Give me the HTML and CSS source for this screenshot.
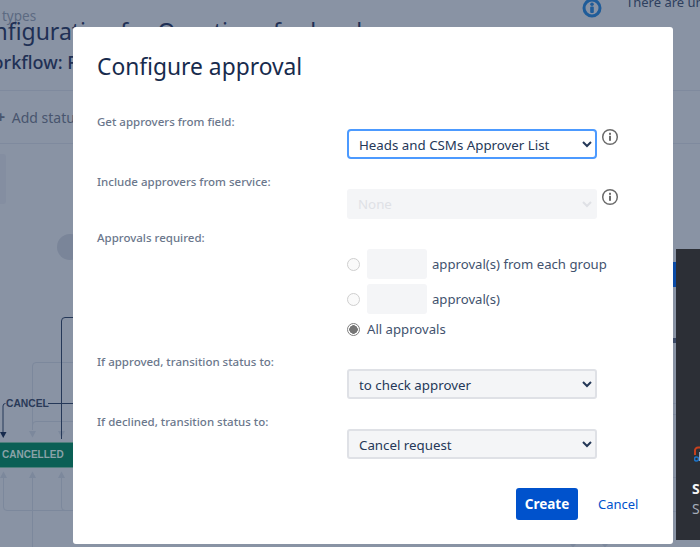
FILE: index.html
```html
<!DOCTYPE html>
<html lang="en">
<head>
<meta charset="utf-8">
<title>Configure approval</title>
<link rel="stylesheet" href="styles.css">
</head>
<body>
<div class="page">
  <div class="crumb">types</div>
  <div class="page-title">Configuration for Questions for legal</div>
  <div class="workflow">Workflow: F</div>
  <div class="rule rule-a"></div>
  <div class="rule rule-b"></div>
  <div class="add-status"><span class="plus">+</span> Add status</div>
  <div class="side-box"></div>
  <div class="start-node"></div>
  <svg class="page-info" width="20" height="20" viewBox="0 0 20 20" aria-hidden="true">
    <circle cx="10" cy="10" r="8" fill="none" stroke="#1f5c99" stroke-width="3"/>
    <rect x="8.2" y="8.5" width="3.6" height="6.5" rx="1" fill="#1f5c99"/>
    <circle cx="10" cy="6.3" r="1.8" fill="#1f5c99"/>
  </svg>
  <div class="notice">There are un</div>

  <svg class="diagram" width="73" height="547" viewBox="0 0 73 547" aria-hidden="true">
    <g fill="none" stroke="#7c889c" stroke-width="1">
      <path d="M73 362.5H36a3.500 3.500 0 0 0-3.500 3.500V430"/>
      <path d="M73 421.500H36a3.500 3.500 0 0 0-3.500 3.500V430"/>
      <path d="M3.500 478V507a3.500 3.500 0 0 0 3.500 3.500H73"/>
      <path d="M61.500 478V507a3.500 3.500 0 0 0 3.500 3.500H73"/>
      <path d="M32.500 478V547"/>
    </g>
    <g fill="#7c889c">
      <path d="M29 431h7l-3.500 6.500z"/>
      <path d="M58 431h7l-3.500 6.500z"/>
      <path d="M0 478h7l-3.500-6.500z"/>
      <path d="M29 478h7l-3.500-6.500z"/>
      <path d="M58 478h7l-3.500-6.500z"/>
    </g>
    <g fill="none" stroke="#253858" stroke-width="1">
      <path d="M73 317.500H65a3.500 3.500 0 0 0-3.500 3.500V439"/>
      <path d="M48 403.500H73"/>
      <path d="M5.500 403.500a2.500 2.500 0 0 0-2.500 2.500V432"/>
    </g>
    <path d="M0 432h6.500l-3.250 6z" fill="#172b4d"/>
  </svg>
  <div class="edge-label">CANCEL</div>
  <div class="status-bar">CANCELLED</div>

  <div class="strip strip-blue"></div>
  <div class="strip strip-line-1"></div>
  <div class="strip strip-line-2"></div>
  <div class="strip strip-line-3"></div>
  <div class="strip strip-line-4"></div>
  <div class="strip strip-dot"></div>
  <svg class="below-arrows" width="44" height="4" viewBox="0 0 44 4" aria-hidden="true">
    <path d="M0 0h6l-3 3.500zM32 0h6l-3 3.500z" fill="#7c889c"/>
  </svg>

  <aside class="dark-panel">
    <svg class="panel-logo" width="8" height="18" viewBox="0 0 8 18" aria-hidden="true">
      <path d="M8 1.500H4a3 3 0 0 0-3 3V9" fill="none" stroke="#c7401d" stroke-width="2"/>
      <circle cx="2.500" cy="13" r="2" fill="none" stroke="#1c74c9" stroke-width="1.500"/>
      <rect x="5" y="6" width="3" height="9" fill="#8fa3bb"/>
    </svg>
    <div class="panel-title">S</div>
    <div class="panel-sub">S</div>
  </aside>

  <div class="modal" role="dialog" aria-labelledby="modal-title">
    <h1 class="modal-title" id="modal-title">Configure approval</h1>
    <form class="form">
      <label class="form-label">Get approvers from field:</label>
      <div class="control">
        <select class="select select-focus">
          <option>Heads and CSMs Approver List</option>
        </select>
        <svg class="info" width="18" height="18" viewBox="0 0 18 18" aria-hidden="true">
          <circle cx="9" cy="9" r="7.300" fill="none" stroke="#6b6b6b" stroke-width="1.500"/>
          <rect x="8" y="7.800" width="2" height="5" fill="#6b6b6b"/>
          <rect x="8" y="4.800" width="2" height="2" fill="#6b6b6b"/>
        </svg>
      </div>

      <label class="form-label">Include approvers from service:</label>
      <div class="control">
        <select class="select select-disabled" disabled>
          <option>None</option>
        </select>
        <svg class="info" width="18" height="18" viewBox="0 0 18 18" aria-hidden="true">
          <circle cx="9" cy="9" r="7.300" fill="none" stroke="#6b6b6b" stroke-width="1.500"/>
          <rect x="8" y="7.800" width="2" height="5" fill="#6b6b6b"/>
          <rect x="8" y="4.800" width="2" height="2" fill="#6b6b6b"/>
        </svg>
      </div>

      <label class="form-label form-label-third">Approvals required:</label>
      <div class="radios">
        <div class="radio-row">
          <input class="radio" type="radio" name="req" disabled>
          <input class="count" type="text" disabled>
          <span class="radio-text">approval(s) from each group</span>
        </div>
        <div class="radio-row">
          <input class="radio" type="radio" name="req" disabled>
          <input class="count" type="text" disabled>
          <span class="radio-text">approval(s)</span>
        </div>
        <div class="radio-row radio-row-all">
          <input class="radio" type="radio" name="req" checked disabled>
          <span class="radio-text">All approvals</span>
        </div>
      </div>

      <label class="form-label">If approved, transition status to:</label>
      <div class="control">
        <select class="select"><option>to check approver</option></select>
      </div>

      <label class="form-label">If declined, transition status to:</label>
      <div class="control">
        <select class="select"><option>Cancel request</option></select>
      </div>
    </form>
    <div class="actions">
      <button class="btn-primary" type="button">Create</button>
      <a class="btn-link" href="#">Cancel</a>
    </div>
  </div>
</div>
</body>
</html>
```
FILE: styles.css
```css
* { box-sizing: border-box; }
html, body { margin: 0; padding: 0; }
body {
  font-family: "Noto Sans", "Open Sans", sans-serif;
  color: #253858;
}
.page {
  position: relative;
  width: 700px;
  height: 547px;
  overflow: hidden;
  background: #8993a4;
}

/* dimmed page behind the dialog */
.crumb {
  position: absolute; left: 2px; top: 7px;
  font-size: 13.500px; line-height: 18px; color: #5c6a82;
}
.page-title {
  position: absolute; left: -35px; top: 15px;
  font-size: 23px; line-height: 32px; color: #1f3055;
  white-space: nowrap;
}
.workflow {
  position: absolute; left: -24px; top: 50px;
  font-size: 18px; line-height: 24px; font-weight: 500; color: #1f3055;
  white-space: nowrap;
}
.rule { position: absolute; left: 0; width: 700px; height: 1px; background: #7f8a9e; }
.rule-a { top: 90px; }
.rule-b { top: 143px; }
.add-status {
  position: absolute; left: -4px; top: 107px;
  font-size: 14px; line-height: 20px; color: #48556e; white-space: nowrap;
}
.plus { font-size: 16px; font-weight: 700; margin-right: 3px; }
.side-box {
  position: absolute; left: -6px; top: 154px;
  width: 12px; height: 50px; border-radius: 3px; background: #848ea1;
}
.start-node {
  position: absolute; left: 57px; top: 234px;
  width: 26px; height: 26px; border-radius: 50%; background: #7a8599;
}
.page-info { position: absolute; left: 582px; top: -2px; }
.notice {
  position: absolute; left: 626px; top: -7px;
  font-size: 13px; line-height: 18px; color: #2e3f5e; white-space: nowrap;
}
.diagram { position: absolute; left: 0; top: 0; }
.edge-label {
  position: absolute; left: 6px; top: 397px;
  font-family: "Liberation Sans", sans-serif;
  font-size: 10.300px; line-height: 13px; font-weight: 700; color: #2a3a58;
}
.status-bar {
  position: absolute; left: 0; top: 442px;
  width: 73px; height: 26px; padding-left: 2px;
  background: #0b5f55; border-top: 1px solid #4f7f7c; border-bottom: 1px solid #4f7f7c;
  font-family: "Liberation Sans", sans-serif;
  font-size: 10px; line-height: 24px; font-weight: 700; color: #8aa2a8;
  white-space: nowrap; overflow: hidden;
}
.strip { position: absolute; left: 673px; width: 3px; }
.strip-blue { top: 262px; height: 25px; background: #0b4ba6; }
.strip-line-1 { top: 403px; height: 1px; background: #7f8a9e; }
.strip-line-2 { top: 414px; height: 1px; background: #7f8a9e; }
.strip-line-3 { top: 477px; height: 1px; background: #7f8a9e; }
.strip-line-4 { top: 511px; height: 1px; background: #7f8a9e; }
.strip-dot { top: 338px; height: 5px; background: #3c4a66; }
.below-arrows { position: absolute; left: 570px; top: 544px; }
.dark-panel {
  position: absolute; left: 676px; top: 249px;
  width: 40px; height: 291px; background: #2c2f36;
}
.panel-logo { position: absolute; left: 18px; top: 197px; }
.panel-title {
  position: absolute; left: 16px; top: 231px;
  font-size: 14px; line-height: 18px; font-weight: 700; color: #f4f5f7;
}
.panel-sub {
  position: absolute; left: 16px; top: 251px;
  font-size: 14px; line-height: 18px; color: #a5adba;
}

/* dialog */
.modal {
  position: absolute; left: 73px; top: 27px;
  width: 600px; height: 517px;
  padding: 24px 24px 0;
  background: #fff;
  border-radius: 3px;
}
.modal-title {
  margin: 0;
  font-size: 22.800px; line-height: 32px; font-weight: 400; color: #172b4d;
}
.form {
  display: grid;
  grid-template-columns: 250px 1fr;
  column-gap: 0;
  row-gap: 30px;
  margin-top: 46px;
}
.form-label {
  display: block;
  margin-top: -15px;
  font-size: 11.500px; line-height: 16px; font-weight: 500; color: #6b778c;
}
.form-label-third { margin-top: -19px; }
.control { display: flex; align-items: flex-start; gap: 4px; }
.select {
  width: 250px; height: 30px;
  padding: 1px 4px 0 6px;
  font-family: inherit; font-size: 13.300px; color: #253858;
  background-color: #f4f5f7;
  border: 2px solid #dfe1e6;
  border-radius: 3px;
  outline: none;
}
.select-focus {
  background-color: #fff;
  border-color: #4c9aff;
  border-radius: 4px;
}
.select-disabled {
  padding: 0 4px 0 5px;
  color: #dfe1e6;
  background-color: #f4f5f7;
  border-color: #f4f5f7;
  opacity: 1;
}
.info { flex: none; margin-top: -1px; }
.radios { display: flex; flex-direction: column; gap: 5px; }
.radio-row { display: flex; align-items: center; height: 30px; }
.radio-row-all { height: 20px; }
.radio {
  flex: none; width: 13px; height: 13px; margin: 0 7px 0 0;
  appearance: none;
  background: #fafafa;
  border: 1px solid #cfcfcf;
  border-radius: 50%;
}
.radio:checked {
  background: radial-gradient(circle, #767676 0 4px, #fff 4.500px);
  border-color: #7f7f7f;
}
.count {
  width: 60px; height: 30px; padding: 0; margin-right: 5px;
  background: #f4f5f7; border: 0; border-radius: 3px;
}
.radio-text { font-size: 13.150px; line-height: 18px; color: #42526e; white-space: nowrap; }
.actions {
  display: flex; align-items: center; justify-content: flex-end;
  gap: 20px;
  margin-top: 29px;
  padding-right: 10px;
}
.btn-primary {
  width: 62px; height: 32px; padding: 0;
  margin-left: 1px;
  font-family: inherit; font-size: 13.500px; font-weight: 700; color: #fff;
  background: #0052cc; border: 0; border-radius: 3px;
}
.btn-link { font-size: 13px; color: #0052cc; text-decoration: none; width: 41px; }
```
